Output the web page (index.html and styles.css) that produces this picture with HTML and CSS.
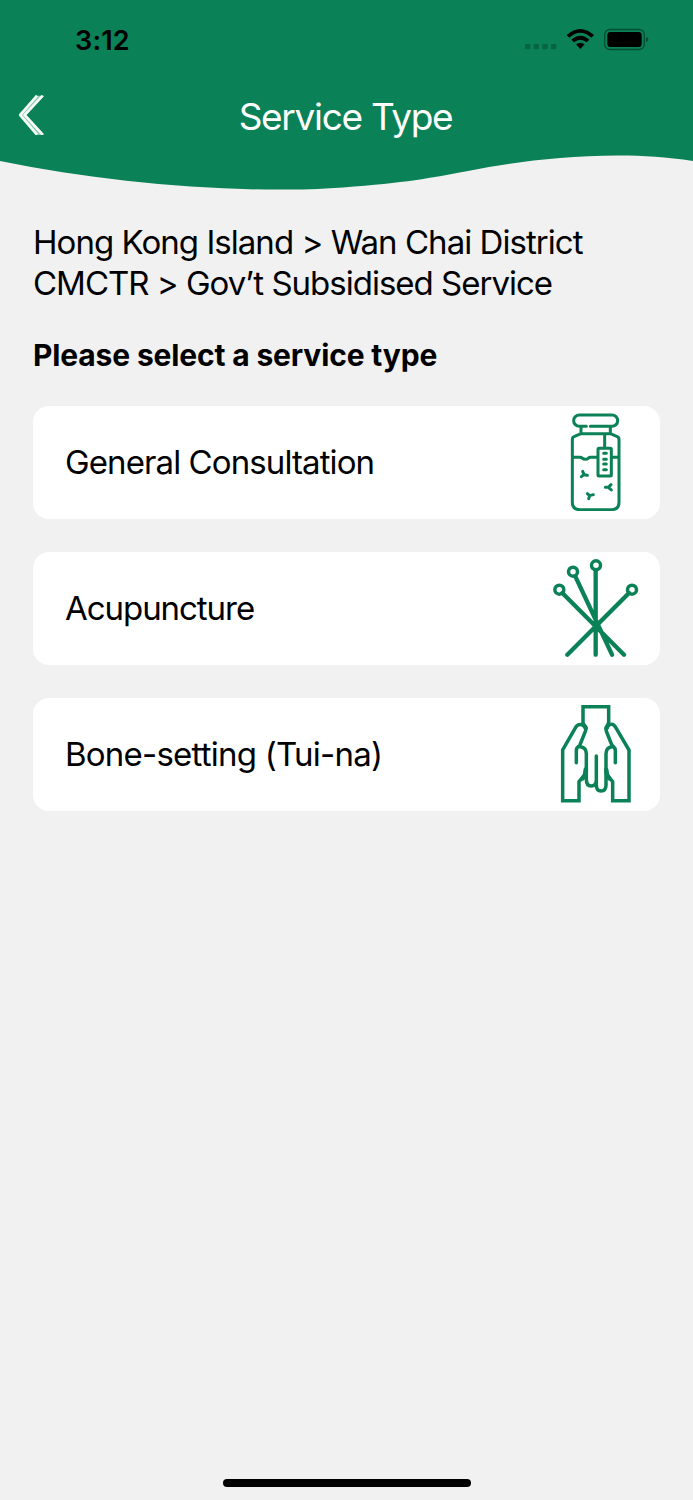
FILE: index.html
```html
<!DOCTYPE html>
<html lang="en">
<head>
<meta charset="utf-8">
<title>Service Type</title>
<link rel="stylesheet" href="styles.css">
</head>
<body>
<div class="screen">
  <header class="header">
    <svg class="wave" viewBox="0 0 693 190" aria-hidden="true"><path d="M0 0H693V161C666 157 641 155.500 618 155.600C560 156 515 162 468 171C430 178 406 183 343 187.400C318 189 301 189.600 280 189.600C185 189.600 90 179 0 161Z"/></svg>
    <div class="status">
      <span class="time">3:12</span>
      <svg class="status-icons" viewBox="0 0 480 150" aria-hidden="true">
        <g fill="#066344"><rect x="45" y="87" width="16" height="16" rx="4"/><rect x="71" y="87" width="16" height="16" rx="4"/><rect x="97" y="87" width="16" height="16" rx="4"/><rect x="123" y="87" width="16" height="16" rx="4"/></g>
        <path d="M170 60Q211 24 252 60L244 68Q211 39 178 68ZM184 74Q211 51 238 74L230 82Q211 67 192 82ZM198 88Q211 79 224 88L211 102Z"/>
        <rect x="284" y="43.500" width="119" height="60" rx="16" fill="none" stroke="#054f36" stroke-width="4"/>
        <rect x="292" y="51" width="103" height="45" rx="9"/>
        <path d="M408 65Q415 68 415 73.500T408 82Z" fill="#054f36"/>
      </svg>
    </div>
    <div class="nav">
      <svg class="back" viewBox="0 0 78 120" aria-hidden="true"><path class="back-fill" d="M50 2H76L21 60L76 120H50L1 64V56Z"/><path d="M54 2L4 60L54 119M71 2L17 60L71 119"/></svg>
      <h1 class="title">Service Type</h1>
    </div>
  </header>
  <main class="content">
    <p class="crumb"><span class="crumb-a">Hong Kong Island &gt; Wan Chai District</span><br><span class="crumb-b">CMCTR &gt; Gov’t Subsidised Service</span></p>
    <h2 class="prompt">Please select a service type</h2>
    <div class="list">
      <div class="card"><span class="label label-general">General Consultation</span>
        <svg class="icon" viewBox="6 24 294 294" aria-hidden="true">
          <path d="M124 64H103A15 15 0 0 1 103 30H201A15 15 0 0 1 201 64H136M108 67V84M196 67V84M108 86H196M108 86L87 95Q82 97 82 104V292Q82 314 104 314H200Q222 314 222 292V104Q222 97 217 95L196 86M179 88V128M83 157H105C113 157 111 163 121 163C131 163 128 157 137 157H156M202 157H222"/>
          <rect x="159" y="130" width="40" height="83" rx="3"/>
          <path d="M176 145H184M176 163H184M176 177H184M176 194H184M113 199L117 209L127 211M117 209L109 215M198 239L190 247L199 255M190 247H181M127 266L134 272L145 269M134 272L131 281"/>
        </svg></div>
      <div class="card"><span class="label label-acupuncture">Acupuncture</span>
        <svg class="icon needles" viewBox="6 27 294 294" aria-hidden="true">
          <path d="M52 129L237 314M91 79L201 314M152 60V314M252 129L67 314"/><g class="heads"><circle cx="43" cy="119" r="13.500"/><circle cx="84" cy="65" r="13.500"/><circle cx="153" cy="46" r="13.500"/><circle cx="261" cy="119" r="13.500"/></g>
        </svg></div>
      <div class="card"><span class="label label-bone">Bone-setting (Tui-na)</span>
        <svg class="icon hands" viewBox="6 24 294 294" aria-hidden="true">
          <path d="M114 84V29H191V84"/>
          <path d="M94 197V161C94 149 101 151 105 143L121 103C125 91 121 84 109 83Q98 81 92 91L53 159V311H102V254L117 236Q121 230 121 216"/>
          <path d="M211 197V161C211 149 205 151 200 143L185 105C180 93 184 85 194 83Q205 79 212 91L252 159V311H203V254L188 236Q184 230 184 216"/>
          <path d="M105 149Q124 150 124 171V247Q124 267 138 267Q154 267 154 248V177M154 248V264Q154 282 168 282Q183 282 183 264V171Q183 150 202 149"/>
          <path class="thick" d="M115 82L122 93M190 82L185 93M123 219Q122 234 113 244M184 219Q184 234 193 244"/>
        </svg></div>
    </div>
  </main>
  <div class="home-bar"></div>
</div>
</body>
</html>
```
FILE: styles.css
```css
* { box-sizing: border-box; }
body { margin: 0; background: #f1f1f1; color: #000; font-family: Inter, "Liberation Sans", sans-serif; }
.screen { width: 693px; height: 1500px; display: flex; flex-direction: column; overflow: hidden; }
.header { height: 190px; flex: none; position: relative; }
.wave { position: absolute; inset: 0; width: 693px; height: 190px; fill: #0a8157; }
.status { position: relative; height: 80px; display: flex; justify-content: space-between; padding: 15px 23px 0 75px; }
.time { font-size: 27px; font-weight: 600; line-height: 51px; letter-spacing: 0.2px; white-space: nowrap; }
.status-icons { width: 160px; height: 50px; }
.nav { position: relative; height: 76px; display: grid; grid-template-columns: 60px 1fr 60px; align-items: center; }
.back { width: 26px; height: 40px; margin: -6px 0 0 19px; fill: none; stroke: #f4faf8; stroke-width: 8; }
.back-fill { fill: #8fc6b1; stroke: none; }
.title { margin: -2px 2px 0 0; text-align: center; color: #fff; font-size: 37px; font-weight: 400; line-height: 50px; letter-spacing: -1.3px; white-space: nowrap; }
.content { padding: 32px 33px 0; }
.crumb { margin: 0; font-size: 33px; line-height: 41px; white-space: nowrap; }
.crumb-a { letter-spacing: -0.96px; }
.crumb-b { letter-spacing: -1px; }
.prompt { margin: 30px 0 29.5px; font-size: 30px; font-weight: 700; line-height: 42px; letter-spacing: -0.15px; white-space: nowrap; }
.list { display: grid; gap: 33px; }
.card { height: 113px; border-radius: 16px; background: #fff; display: flex; align-items: center; justify-content: space-between; padding: 0 15px 0 32px; }
.label { font-size: 33px; line-height: 42px; white-space: nowrap; }
.label-general { letter-spacing: -0.9px; }
.label-acupuncture { letter-spacing: -1.05px; }
.label-bone { letter-spacing: -0.77px; }
.icon { width: 98px; height: 98px; fill: none; stroke: #0a8157; stroke-width: 9; stroke-linecap: round; stroke-linejoin: round; }
.needles { stroke-width: 13; }
.heads { stroke-width: 10.5; }
.hands { stroke-width: 10.5; stroke-linejoin: miter; }
.thick { stroke-width: 13; }
.home-bar { width: 248px; height: 8px; margin: auto auto 13px 223px; border-radius: 4px; background: #000; }
```
